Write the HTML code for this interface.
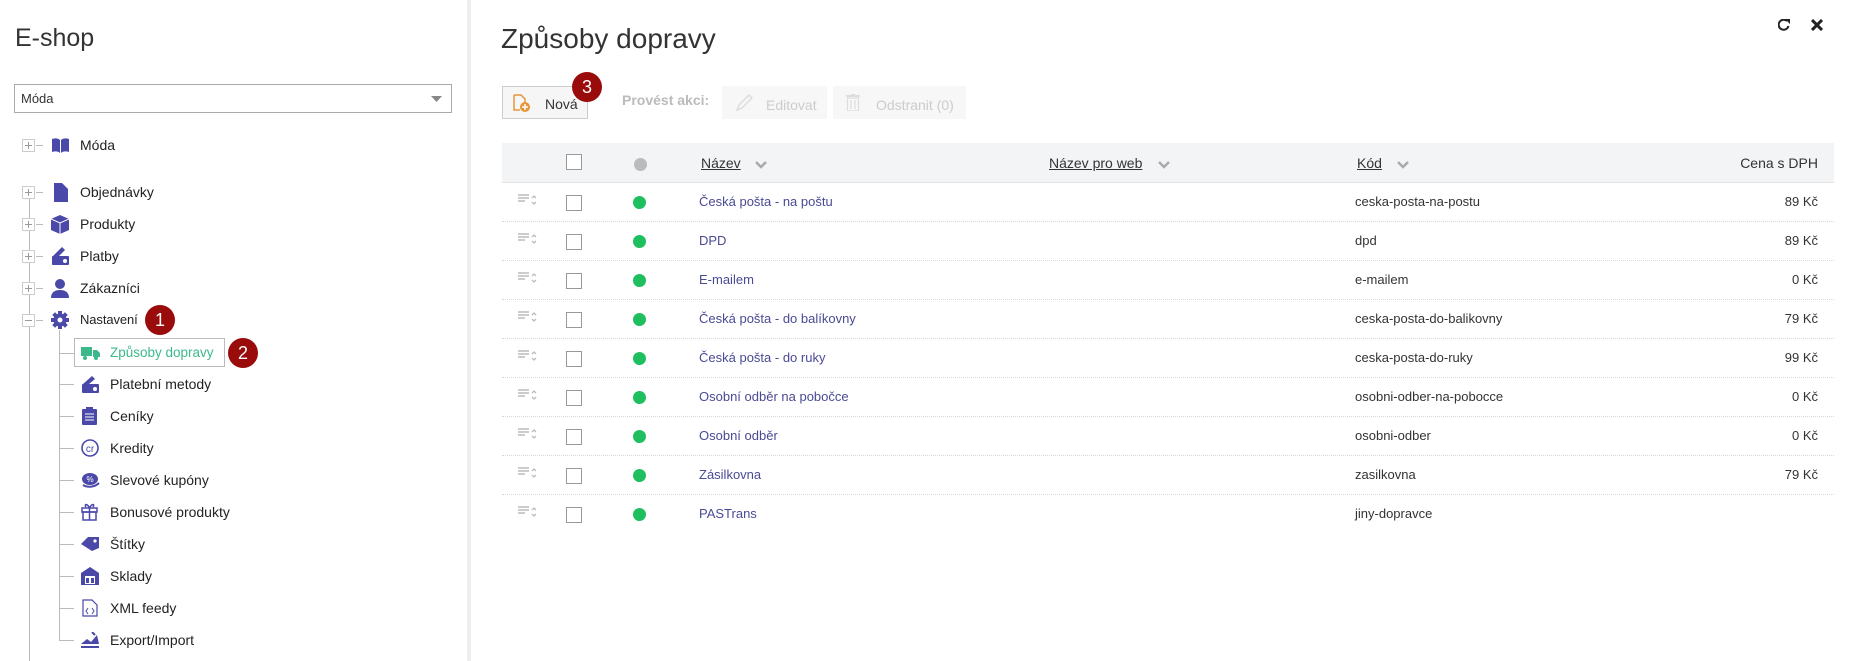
<!DOCTYPE html>
<html><head><meta charset="utf-8">
<style>
*{margin:0;padding:0;box-sizing:border-box}
body{width:1866px;height:661px;overflow:hidden;background:#fff;font-family:"Liberation Sans",Arial,sans-serif;color:#222;position:relative}
.a{position:absolute}
.sb{left:467px;top:0;width:4px;height:661px;background:#eee}
.t{font-size:14px;line-height:16px;white-space:nowrap}
.r{font-size:13px;line-height:16px;white-space:nowrap}
.pb{width:13px;height:13px;border:1px solid #ccc;background:#fff}
.pb:before{content:"";position:absolute;left:2px;top:5px;width:7px;height:1px;background:#999}
.pb.p:after{content:"";position:absolute;left:5px;top:2px;width:1px;height:7px;background:#999}
.badge{width:30px;height:30px;border-radius:50%;background:#9a0b0b;color:#fff;font-size:18px;line-height:30px;text-align:center}
.row{left:502px;width:1332px;height:39px;border-bottom:1px dotted #d8d8d8}
.cb{width:16px;height:16px;border:1px solid #999;background:#fff}
.dot{width:13px;height:13px;border-radius:50%;background:#1fbf5f}
.lnk{color:#4a4a95}
.hd{color:#333;text-decoration:underline;font-size:14px}
.chev{width:12px;height:8px}
</style></head><body>
<div class="sb a"></div>
<div class="a" style="left:15px;top:24px;font-size:25px;color:#333">E-shop</div>
<div class="a" style="left:14px;top:84px;width:438px;height:29px;border:1px solid #aaa"></div>
<div class="a t" style="left:21px;top:91px;font-size:13px;color:#333">Móda</div>
<svg class="a" style="left:431px;top:96px" width="11" height="6"><path d="M0 0h11L5.5 6z" fill="#888"/></svg>

<div class="a" style="left:29px;top:199px;width:1px;height:462px;background:#bbb"></div>
<div class="a" style="left:59px;top:330px;width:1px;height:311px;background:#bbb"></div>

<div class="a pb p" style="left:22px;top:139px"></div><div class="a" style="left:36px;top:145px;width:7px;height:1px;background:#bbb"></div>
<svg class="a" style="left:51px;top:137px" width="19" height="17"><path d="M1 2c3-1 6-1 8 1v13c-2-2-5-2-8-1zM18 2c-3-1-6-1-8 1v13c2-2 5-2 8-1z" fill="#4a48a8"/></svg>
<div class="a t" style="left:80px;top:137px">Móda</div>

<div class="a pb p" style="left:22px;top:186px"></div><div class="a" style="left:36px;top:192px;width:7px;height:1px;background:#bbb"></div>
<svg class="a" style="left:52px;top:183px" width="17" height="19"><path d="M2 0h8l6 6v13H2z" fill="#4a48a8"/></svg>
<div class="a t" style="left:80px;top:184px">Objednávky</div>

<div class="a pb p" style="left:22px;top:218px"></div><div class="a" style="left:36px;top:224px;width:7px;height:1px;background:#bbb"></div>
<svg class="a" style="left:51px;top:215px" width="18" height="19"><path d="M9 0l9 4v11l-9 4-9-4V4z" fill="#4a48a8"/><path d="M0 4l9 4 9-4M9 8v11" stroke="#fff" fill="none"/></svg>
<div class="a t" style="left:80px;top:216px">Produkty</div>

<div class="a pb p" style="left:22px;top:250px"></div><div class="a" style="left:36px;top:256px;width:7px;height:1px;background:#bbb"></div>
<svg class="a" style="left:51px;top:247px" width="18" height="19"><path d="M2 9l9-9 3 3-6 6z" fill="#4a48a8"/><rect x="1" y="9" width="17" height="9" rx="1" fill="#4a48a8"/><circle cx="14" cy="14" r="2" fill="#fff"/></svg>
<div class="a t" style="left:80px;top:248px">Platby</div>

<div class="a pb p" style="left:22px;top:282px"></div><div class="a" style="left:36px;top:288px;width:7px;height:1px;background:#bbb"></div>
<svg class="a" style="left:51px;top:279px" width="18" height="19"><circle cx="9" cy="5" r="5" fill="#4a48a8"/><path d="M0 19c0-6 4-8 9-8s9 2 9 8z" fill="#4a48a8"/></svg>
<div class="a t" style="left:80px;top:280px">Zákazníci</div>

<div class="a pb" style="left:22px;top:314px"></div><div class="a" style="left:36px;top:320px;width:7px;height:1px;background:#bbb"></div>
<svg class="a" style="left:51px;top:311px" width="18" height="18" viewBox="0 0 18 18"><g fill="#4a48a8"><circle cx="9" cy="9" r="6.5"/><rect x="7" y="0" width="4" height="18"/><rect x="0" y="7" width="18" height="4"/><rect x="7" y="0" width="4" height="18" transform="rotate(45 9 9)"/><rect x="7" y="0" width="4" height="18" transform="rotate(-45 9 9)"/></g><circle cx="9" cy="9" r="2.5" fill="#fff"/></svg>
<div class="a t" style="left:80px;top:312px;font-size:13px;letter-spacing:-0.1px">Nastavení</div>
<div class="a badge" style="left:145px;top:305px">1</div>

<div class="a" style="left:59px;top:353px;width:15px;height:1px;background:#bbb"></div>
<div class="a" style="left:74px;top:338px;width:151px;height:29px;border:1px solid #bbb"></div>
<svg class="a" style="left:81px;top:346px" width="19" height="14"><rect x="0" y="1" width="11" height="9" fill="#3cb98a"/><path d="M12 4h4l3 3v4h-7z" fill="#3cb98a"/><circle cx="4" cy="12" r="2" fill="#3cb98a"/><circle cx="15" cy="12" r="2" fill="#3cb98a"/></svg>
<div class="a t" style="left:110px;top:345px;color:#3cb98a;font-size:13.5px">Způsoby dopravy</div>
<div class="a badge" style="left:228px;top:338px">2</div>

<div class="a" style="left:59px;top:384px;width:15px;height:1px;background:#bbb"></div>
<svg class="a" style="left:81px;top:376px" width="18" height="18"><path d="M2 8l9-8 3 3-6 5z" fill="#4a48a8"/><rect x="1" y="8" width="17" height="9" rx="1" fill="#4a48a8"/><circle cx="14" cy="13" r="2" fill="#fff"/></svg>
<div class="a t" style="left:110px;top:376px">Platební metody</div>

<div class="a" style="left:59px;top:416px;width:15px;height:1px;background:#bbb"></div>
<svg class="a" style="left:82px;top:407px" width="15" height="18"><rect x="0" y="2" width="15" height="16" rx="1" fill="#4a48a8"/><rect x="4" y="0" width="7" height="4" fill="#4a48a8"/><path d="M3 7h9M3 10h9M3 13h9" stroke="#fff"/></svg>
<div class="a t" style="left:110px;top:408px">Ceníky</div>

<div class="a" style="left:59px;top:448px;width:15px;height:1px;background:#bbb"></div>
<svg class="a" style="left:81px;top:439px" width="18" height="18"><circle cx="9" cy="9" r="8" fill="none" stroke="#4a48a8" stroke-width="1.6"/><text x="9" y="13" font-size="10" text-anchor="middle" fill="#4a48a8" font-family="Liberation Sans">cr</text></svg>
<div class="a t" style="left:110px;top:440px">Kredity</div>

<div class="a" style="left:59px;top:480px;width:15px;height:1px;background:#bbb"></div>
<svg class="a" style="left:81px;top:472px" width="19" height="16"><ellipse cx="9" cy="7" rx="8" ry="6" fill="#4a48a8"/><path d="M2 13c5 3 12 2 16-2" stroke="#4a48a8" stroke-width="2" fill="none"/><text x="9" y="10" font-size="8" text-anchor="middle" fill="#fff" font-family="Liberation Sans">%</text></svg>
<div class="a t" style="left:110px;top:472px">Slevové kupóny</div>

<div class="a" style="left:59px;top:512px;width:15px;height:1px;background:#bbb"></div>
<svg class="a" style="left:81px;top:503px" width="17" height="18"><rect x="1" y="5" width="15" height="4" fill="none" stroke="#4a48a8" stroke-width="1.5"/><rect x="2" y="9" width="13" height="8" fill="none" stroke="#4a48a8" stroke-width="1.5"/><path d="M8.5 5v12M8.5 5C6 0 3 1 5 4M8.5 5C11 0 14 1 12 4" stroke="#4a48a8" stroke-width="1.5" fill="none"/></svg>
<div class="a t" style="left:110px;top:504px">Bonusové produkty</div>

<div class="a" style="left:59px;top:544px;width:15px;height:1px;background:#bbb"></div>
<svg class="a" style="left:81px;top:536px" width="19" height="15"><path d="M0 8l7-7h11v11l-7 3z" fill="#4a48a8"/><circle cx="14" cy="5" r="1.6" fill="#fff"/></svg>
<div class="a t" style="left:110px;top:536px">Štítky</div>

<div class="a" style="left:59px;top:576px;width:15px;height:1px;background:#bbb"></div>
<svg class="a" style="left:81px;top:567px" width="18" height="18"><path d="M0 6l9-6 9 6v12H0z" fill="#4a48a8"/><rect x="4" y="9" width="10" height="8" fill="#fff"/><rect x="5" y="11" width="3" height="5" fill="#4a48a8"/><rect x="10" y="11" width="3" height="5" fill="#4a48a8"/></svg>
<div class="a t" style="left:110px;top:568px">Sklady</div>

<div class="a" style="left:59px;top:608px;width:15px;height:1px;background:#bbb"></div>
<svg class="a" style="left:82px;top:599px" width="16" height="18"><path d="M1 1h9l5 5v11H1z" fill="none" stroke="#4a48a8" stroke-width="1.2"/><path d="M6 9l-2 3 2 3M10 9l2 3-2 3" stroke="#4a48a8" fill="none"/></svg>
<div class="a t" style="left:110px;top:600px">XML feedy</div>

<div class="a" style="left:59px;top:640px;width:15px;height:1px;background:#bbb"></div>
<svg class="a" style="left:81px;top:632px" width="18" height="17"><path d="M0 12l6-5 4 3 6-7 2 9z" fill="#4a48a8"/><path d="M11 0l3 3" stroke="#4a48a8" stroke-width="2"/><rect x="0" y="14" width="18" height="2" fill="#4a48a8"/></svg>
<div class="a t" style="left:110px;top:632px">Export/Import</div>

<div class="a" style="left:501px;top:23px;font-size:28px;color:#333">Způsoby dopravy</div>
<svg class="a" style="left:1778px;top:19px" width="12" height="12"><path d="M9 2A5 5 0 1 0 10.5 7" stroke="#222" stroke-width="2" fill="none"/><path d="M7 0h5v5z" fill="#222"/></svg>
<svg class="a" style="left:1811px;top:19px" width="12" height="12"><path d="M1 1l10 10M11 1L1 11" stroke="#222" stroke-width="3"/></svg>

<div class="a" style="left:502px;top:86px;width:86px;height:33px;border:1px solid #ccc;background:#f6f6f6"></div>
<svg class="a" style="left:513px;top:94px" width="18" height="18"><path d="M1 1h7l4 4v5" stroke="#e5953a" fill="none" stroke-width="1.5"/><path d="M1 1v15h6" stroke="#e5953a" fill="none" stroke-width="1.5"/><circle cx="12" cy="13" r="5" fill="#e5953a"/><path d="M12 10v6M9 13h6" stroke="#fff" stroke-width="1.5"/></svg>
<div class="a t" style="left:545px;top:96px;color:#333">Nová</div>
<div class="a badge" style="left:572px;top:72px">3</div>
<div class="a t" style="left:622px;top:92px;color:#bbb;font-weight:bold">Provést akci:</div>
<div class="a" style="left:722px;top:86px;width:105px;height:33px;background:#f7f7f7"></div>
<svg class="a" style="left:735px;top:94px" width="18" height="18"><path d="M2 16l2-5 10-10 3 3-10 10z" fill="none" stroke="#ddd" stroke-width="1.5"/></svg>
<div class="a t" style="left:766px;top:97px;color:#ccc">Editovat</div>
<div class="a" style="left:833px;top:86px;width:133px;height:33px;background:#f7f7f7"></div>
<svg class="a" style="left:846px;top:94px" width="14" height="17"><rect x="0" y="1" width="14" height="2" fill="#ddd"/><rect x="5" y="0" width="4" height="2" fill="#ddd"/><path d="M1.5 4h11v13h-11zM5 6v9M9 6v9" stroke="#ddd" fill="none" stroke-width="1.2"/></svg>
<div class="a t" style="left:876px;top:97px;color:#ccc">Odstranit (0)</div>

<div class="a" style="left:502px;top:143px;width:1332px;height:40px;background:#f3f4f6;border-bottom:1px solid #e4e4e4"></div>
<div class="a cb" style="left:566px;top:154px"></div>
<div class="a dot" style="left:634px;top:158px;background:#bbb"></div>
<div class="a hd" style="left:701px;top:155px">Název</div>
<svg class="a chev" style="left:755px;top:161px"><path d="M1 1l5 5 5-5" stroke="#aaa" stroke-width="2.5" fill="none"/></svg>
<div class="a hd" style="left:1049px;top:155px">Název pro web</div>
<svg class="a chev" style="left:1158px;top:161px"><path d="M1 1l5 5 5-5" stroke="#aaa" stroke-width="2.5" fill="none"/></svg>
<div class="a hd" style="left:1357px;top:155px">Kód</div>
<svg class="a chev" style="left:1397px;top:161px"><path d="M1 1l5 5 5-5" stroke="#aaa" stroke-width="2.5" fill="none"/></svg>
<div class="a t" style="left:1700px;top:155px;width:118px;text-align:right;color:#333">Cena s DPH</div>

<div class="a row" style="top:183px"></div>
<div class="a row" style="top:222px"></div>
<div class="a row" style="top:261px"></div>
<div class="a row" style="top:300px"></div>
<div class="a row" style="top:339px"></div>
<div class="a row" style="top:378px"></div>
<div class="a row" style="top:417px"></div>
<div class="a row" style="top:456px"></div>
<div class="a row" style="top:495px;border-bottom:none"></div>

<svg class="a" style="left:518px;top:193px" width="20" height="330">
<g id="ri"><path d="M0 2h11M0 5h11M0 8h7" stroke="#bbb" stroke-width="1.6"/><path d="M14 5l2-2 2 2M14 9l2 2 2-2" stroke="#bbb" stroke-width="1.3" fill="none"/></g>
<use href="#ri" y="39"/><use href="#ri" y="78"/><use href="#ri" y="117"/><use href="#ri" y="156"/><use href="#ri" y="195"/><use href="#ri" y="234"/><use href="#ri" y="273"/><use href="#ri" y="312"/>
</svg>

<div class="a cb" style="left:566px;top:195px"></div><div class="a dot" style="left:633px;top:196px"></div>
<div class="a cb" style="left:566px;top:234px"></div><div class="a dot" style="left:633px;top:235px"></div>
<div class="a cb" style="left:566px;top:273px"></div><div class="a dot" style="left:633px;top:274px"></div>
<div class="a cb" style="left:566px;top:312px"></div><div class="a dot" style="left:633px;top:313px"></div>
<div class="a cb" style="left:566px;top:351px"></div><div class="a dot" style="left:633px;top:352px"></div>
<div class="a cb" style="left:566px;top:390px"></div><div class="a dot" style="left:633px;top:391px"></div>
<div class="a cb" style="left:566px;top:429px"></div><div class="a dot" style="left:633px;top:430px"></div>
<div class="a cb" style="left:566px;top:468px"></div><div class="a dot" style="left:633px;top:469px"></div>
<div class="a cb" style="left:566px;top:507px"></div><div class="a dot" style="left:633px;top:508px"></div>

<div class="a r lnk" style="left:699px;top:194px">Česká pošta - na poštu</div>
<div class="a r lnk" style="left:699px;top:233px">DPD</div>
<div class="a r lnk" style="left:699px;top:272px">E-mailem</div>
<div class="a r lnk" style="left:699px;top:311px">Česká pošta - do balíkovny</div>
<div class="a r lnk" style="left:699px;top:350px">Česká pošta - do ruky</div>
<div class="a r lnk" style="left:699px;top:389px">Osobní odběr na pobočce</div>
<div class="a r lnk" style="left:699px;top:428px">Osobní odběr</div>
<div class="a r lnk" style="left:699px;top:467px">Zásilkovna</div>
<div class="a r lnk" style="left:699px;top:506px">PASTrans</div>

<div class="a r" style="left:1355px;top:194px;color:#333">ceska-posta-na-postu</div>
<div class="a r" style="left:1355px;top:233px;color:#333">dpd</div>
<div class="a r" style="left:1355px;top:272px;color:#333">e-mailem</div>
<div class="a r" style="left:1355px;top:311px;color:#333">ceska-posta-do-balikovny</div>
<div class="a r" style="left:1355px;top:350px;color:#333">ceska-posta-do-ruky</div>
<div class="a r" style="left:1355px;top:389px;color:#333">osobni-odber-na-pobocce</div>
<div class="a r" style="left:1355px;top:428px;color:#333">osobni-odber</div>
<div class="a r" style="left:1355px;top:467px;color:#333">zasilkovna</div>
<div class="a r" style="left:1355px;top:506px;color:#333">jiny-dopravce</div>

<div class="a r" style="left:1718px;top:194px;width:100px;text-align:right;color:#333">89 Kč</div>
<div class="a r" style="left:1718px;top:233px;width:100px;text-align:right;color:#333">89 Kč</div>
<div class="a r" style="left:1718px;top:272px;width:100px;text-align:right;color:#333">0 Kč</div>
<div class="a r" style="left:1718px;top:311px;width:100px;text-align:right;color:#333">79 Kč</div>
<div class="a r" style="left:1718px;top:350px;width:100px;text-align:right;color:#333">99 Kč</div>
<div class="a r" style="left:1718px;top:389px;width:100px;text-align:right;color:#333">0 Kč</div>
<div class="a r" style="left:1718px;top:428px;width:100px;text-align:right;color:#333">0 Kč</div>
<div class="a r" style="left:1718px;top:467px;width:100px;text-align:right;color:#333">79 Kč</div>
</body></html>
